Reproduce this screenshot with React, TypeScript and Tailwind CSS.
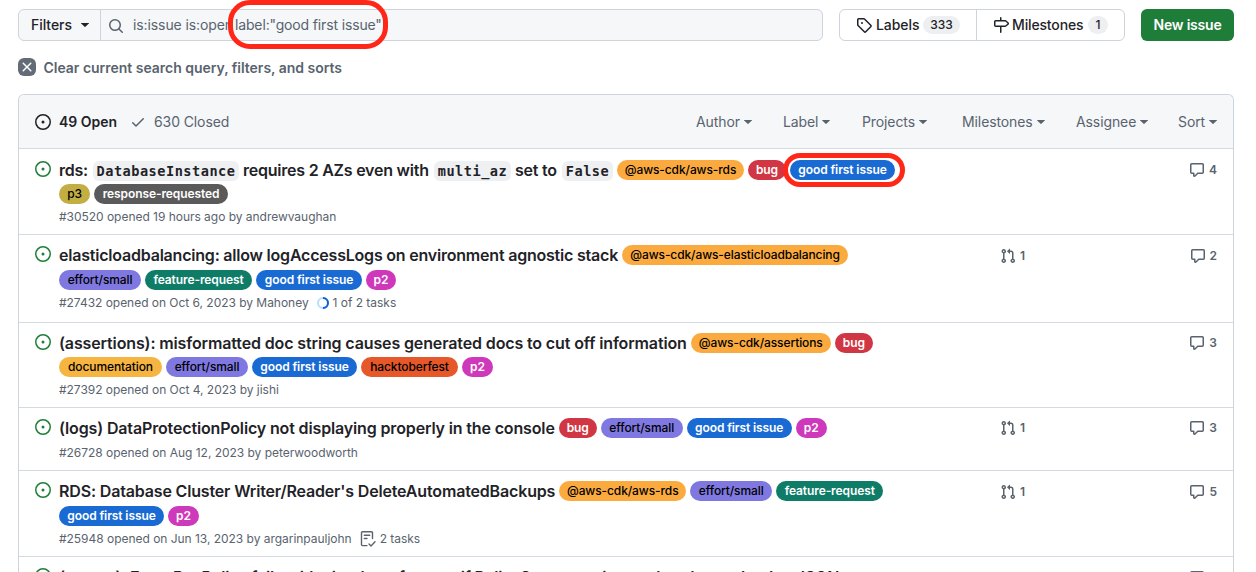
import React, { ReactNode } from "react";

type Tint = { bg: string; fg: string };

const tints: Record<string, Tint> = {
  orange: { bg: "bg-[#fbaa3f]", fg: "text-black font-medium" },
  red: { bg: "bg-[#d03643]", fg: "text-white font-semibold" },
  blue: { bg: "bg-[#1a6ad3]", fg: "text-white font-semibold" },
  olive: { bg: "bg-[#c2ae43]", fg: "text-black font-medium" },
  gray: { bg: "bg-[#5a5a5a]", fg: "text-white font-semibold" },
  purple: { bg: "bg-[#7f78e1]", fg: "text-black font-medium" },
  green: { bg: "bg-[#0f7c68]", fg: "text-white font-semibold" },
  pink: { bg: "bg-[#ce39bb]", fg: "text-white font-semibold" },
  yellow: { bg: "bg-[#f6b541]", fg: "text-black font-medium" },
  rust: { bg: "bg-[#e6572a]", fg: "text-black font-medium" },
};

type LabelInfo = { text: string; tint: string; w: string; ringed?: boolean };

const L = (text: string, tint: string, w: string, ringed = false): LabelInfo => ({ text, tint, w, ringed });

function Pill({ label }: { label: LabelInfo }) {
  const t = tints[label.tint];
  return (
    <span className={`relative flex h-5 shrink-0 items-center justify-center rounded-full text-xs tracking-[-0.1px] ${t.bg} ${t.fg} ${label.w}`}>
      {label.text}
      {label.ringed && <span className="absolute -left-[7px] -right-[10px] -top-[7px] -bottom-[7px] rounded-full border-[5px] border-[#ff2718]" />}
    </span>
  );
}

function Icon({ d, className, size = 16 }: { d: string; className?: string; size?: number }) {
  return (
    <svg width={size} height={size} viewBox="0 0 16 16" fill="currentColor" className={`shrink-0 ${className ?? ""}`}>
      <path fillRule="evenodd" d={d} />
    </svg>
  );
}

const icons = {
  issue: "M8 9.5a1.5 1.5 0 1 0 0-3 1.5 1.5 0 0 0 0 3ZM8 0a8 8 0 1 1 0 16A8 8 0 0 1 8 0ZM1.5 8a6.5 6.5 0 1 0 13 0 6.5 6.5 0 0 0-13 0Z",
  search: "M10.68 11.74a6 6 0 0 1-7.922-8.982 6 6 0 0 1 8.982 7.922l3.04 3.04a.749.749 0 0 1-.326 1.275.749.749 0 0 1-.734-.215ZM11.5 7a4.499 4.499 0 1 0-8.997 0A4.499 4.499 0 0 0 11.5 7Z",
  tag: "M1 7.775V2.75C1 1.784 1.784 1 2.75 1h5.025c.464 0 .91.184 1.238.513l6.25 6.25a1.75 1.75 0 0 1 0 2.474l-5.026 5.026a1.75 1.75 0 0 1-2.474 0l-6.25-6.25A1.752 1.752 0 0 1 1 7.775Zm1.5 0c0 .066.026.13.073.177l6.25 6.25a.25.25 0 0 0 .354 0l5.025-5.025a.25.25 0 0 0 0-.354l-6.25-6.25a.25.25 0 0 0-.177-.073H2.75a.25.25 0 0 0-.25.25ZM6 5a1 1 0 1 1 0 2 1 1 0 0 1 0-2Z",
  milestone: "M7.75 0a.75.75 0 0 1 .75.75V3h3.634c.414 0 .814.147 1.13.414l2.07 1.75a1.75 1.75 0 0 1 0 2.672l-2.07 1.75a1.75 1.75 0 0 1-1.13.414H8.5v5.25a.75.75 0 0 1-1.5 0V10H2.75A1.75 1.75 0 0 1 1 8.25v-3.5C1 3.784 1.784 3 2.75 3H7V.75A.75.75 0 0 1 7.75 0Zm4.384 8.5a.25.25 0 0 0 .161-.06l2.07-1.75a.248.248 0 0 0 0-.38l-2.07-1.75a.25.25 0 0 0-.161-.06H2.75a.25.25 0 0 0-.25.25v3.5c0 .138.112.25.25.25h9.384Z",
  check: "M13.78 4.22a.75.75 0 0 1 0 1.06l-7.25 7.25a.75.75 0 0 1-1.06 0L2.22 9.28a.751.751 0 0 1 .018-1.042.751.751 0 0 1 1.042-.018L6 10.94l6.72-6.72a.75.75 0 0 1 1.06 0Z",
  x: "M3.72 3.72a.75.75 0 0 1 1.06 0L8 6.94l3.22-3.22a.749.749 0 0 1 1.275.326.749.749 0 0 1-.215.734L9.06 8l3.22 3.22a.749.749 0 0 1-.326 1.275.749.749 0 0 1-.734-.215L8 9.06l-3.22 3.22a.751.751 0 0 1-1.042-.018.751.751 0 0 1-.018-1.042L6.94 8 3.72 4.78a.75.75 0 0 1 0-1.06Z",
  comment: "M1 2.75C1 1.784 1.784 1 2.75 1h10.5c.966 0 1.75.784 1.75 1.75v7.5A1.75 1.75 0 0 1 13.25 12H9.06l-2.573 2.573A1.458 1.458 0 0 1 4 13.543V12H2.75A1.75 1.75 0 0 1 1 10.25Zm1.75-.25a.25.25 0 0 0-.25.25v7.5c0 .138.112.25.25.25h2a.75.75 0 0 1 .75.75v2.19l2.72-2.72a.749.749 0 0 1 .53-.22h4.5a.25.25 0 0 0 .25-.25v-7.5a.25.25 0 0 0-.25-.25Z",
  pr: "M1.5 3.25a2.25 2.25 0 1 1 3 2.122v5.256a2.251 2.251 0 1 1-1.5 0V5.372A2.25 2.25 0 0 1 1.5 3.25Zm5.677-.177L9.573.677A.25.25 0 0 1 10 .854V2.5h1A2.5 2.5 0 0 1 13.5 5v5.628a2.251 2.251 0 1 1-1.5 0V5a1 1 0 0 0-1-1h-1v1.646a.25.25 0 0 1-.427.177L7.177 3.427a.25.25 0 0 1 0-.354ZM3.75 2.5a.75.75 0 1 0 0 1.5.75.75 0 0 0 0-1.5Zm0 9.5a.75.75 0 1 0 0 1.5.75.75 0 0 0 0-1.5Zm8.25.75a.75.75 0 1 0 1.5 0 .75.75 0 0 0-1.5 0Z",
};

function Caret({ className = "" }: { className?: string }) {
  return (
    <svg width="8" height="4" viewBox="0 0 8 4" fill="currentColor" className={`shrink-0 ${className}`}>
      <path d="M0.3 0H7.7Q8.2 0 7.8 .4L4.4 3.8Q4 4.1 3.6 3.8L.2 .4Q-.2 0 .3 0Z" />
    </svg>
  );
}

function Code({ children, className }: { children: ReactNode; className: string }) {
  return (
    <code className={`mt-0.5 flex h-5 shrink-0 items-center justify-center rounded-md bg-[#eff0f2] font-['DejaVu_Sans_Mono',monospace] text-[13.6px] font-bold tracking-[0.5px] ${className}`}>
      {children}
    </code>
  );
}

function ProgressRing() {
  return (
    <svg width="12" height="12" viewBox="0 0 12 12" fill="none" strokeWidth="2" className="ml-2 mr-1 shrink-0">
      <circle cx="6" cy="6" r="5" stroke="#b6e0ff" />
      <path d="M6 1a5 5 0 0 1 0 10" stroke="#0d5fd8" />
    </svg>
  );
}

function TaskIcon() {
  return (
    <svg width="16" height="16" viewBox="0 0 16 16" fill="none" stroke="currentColor" strokeWidth="1.4" strokeLinecap="round" strokeLinejoin="round" className="ml-2 mr-1 shrink-0">
      <path d="M7 14.6H2.5A1 1 0 0 1 1.5 13.6V1.8A1 1 0 0 1 2.5.8H11.5A1 1 0 0 1 12.5 1.8V7.5M4.3 4.2H9.7M4.3 7.5H7M9 12.9L11 14.9 15 10.8" />
    </svg>
  );
}

type Issue = {
  height: string;
  iconTop: string;
  titleTop: string;
  labelTop?: string;
  metaTop: string;
  sideTop: string;
  title: ReactNode;
  first?: LabelInfo[];
  second?: LabelInfo[];
  meta?: ReactNode;
  prs?: number;
  comments: number;
};

const goodFirst = (w = "w-[105px]", ringed = false) => L("good first issue", "blue", w, ringed);

const issues: Issue[] = [
  {
    height: "h-[86px]",
    iconTop: "mt-3",
    titleTop: "mt-[9px]",
    labelTop: "mt-0.5",
    metaTop: "mt-[3px]",
    sideTop: "mt-3",
    title: (
      <span className="flex items-center tracking-[-0.23px]">
        <span className="w-[34px]">rds:</span>
        <Code className="w-[146px]">DatabaseInstance</Code>
        <span className="w-[195px] pl-1">requires 2 AZs even with</span>
        <Code className="w-[77px]">multi_az</Code>
        <span className="w-[51px] pl-1">set to</span>
        <Code className="w-[51px]">False</Code>
      </span>
    ),
    first: [L("@aws-cdk/aws-rds", "orange", "w-[127px]"), L("bug", "red", "w-[38px]"), goodFirst("w-[105px]", true)],
    second: [L("p3", "olive", "w-[31px]"), L("response-requested", "gray", "w-[134px]")],
    meta: "#30520 opened 19 hours ago by andrewvaughan",
    comments: 4,
  },
  {
    height: "h-[88px]",
    iconTop: "mt-[11px]",
    titleTop: "mt-2",
    labelTop: "mt-[3px]",
    metaTop: "mt-[3px]",
    sideTop: "mt-3",
    title: <span className="tracking-[-0.21px]">elasticloadbalancing: allow logAccessLogs on environment agnostic stack</span>,
    first: [L("@aws-cdk/aws-elasticloadbalancing", "orange", "w-[226px]")],
    second: [L("effort/small", "purple", "w-[82px]"), L("feature-request", "green", "w-[107px]"), goodFirst("w-[106px]"), L("p2", "pink", "w-[30px]")],
    meta: (
      <>
        #27432 opened on Oct 6, 2023 by Mahoney
        <ProgressRing />1 of 2 tasks
      </>
    ),
    prs: 1,
    comments: 2,
  },
  {
    height: "h-[85px]",
    iconTop: "mt-[11px]",
    titleTop: "mt-2",
    labelTop: "mt-0.5",
    metaTop: "mt-[3px]",
    sideTop: "mt-[11px]",
    title: <span className="tracking-[-0.13px]">(assertions): misformatted doc string causes generated docs to cut off information</span>,
    first: [L("@aws-cdk/assertions", "orange", "w-[140px]"), L("bug", "red", "w-[38px]")],
    second: [
      L("documentation", "yellow", "w-[103px]"),
      L("effort/small", "purple", "w-[82px]"),
      goodFirst(),
      L("hacktoberfest", "rust", "w-[97px]"),
      L("p2", "pink", "w-[31px]"),
    ],
    meta: "#27392 opened on Oct 4, 2023 by jishi",
    comments: 3,
  },
  {
    height: "h-[63px]",
    iconTop: "mt-[11px]",
    titleTop: "mt-2",
    metaTop: "mt-1",
    sideTop: "mt-[11px]",
    title: <span className="tracking-[-0.145px]">(logs) DataProtectionPolicy not displaying properly in the console</span>,
    first: [L("bug", "red", "w-[38px]"), L("effort/small", "purple", "w-[82px]"), goodFirst(), L("p2", "pink", "w-[31px]")],
    meta: "#26728 opened on Aug 12, 2023 by peterwoodworth",
    prs: 1,
    comments: 3,
  },
  {
    height: "h-[86px]",
    iconTop: "mt-[11px]",
    titleTop: "mt-2",
    labelTop: "mt-[3px]",
    metaTop: "mt-[3px]",
    sideTop: "mt-3",
    title: <span className="tracking-[-0.16px]">RDS: Database Cluster Writer/Reader's DeleteAutomatedBackups</span>,
    first: [L("@aws-cdk/aws-rds", "orange", "w-[127px]"), L("effort/small", "purple", "w-[82px]"), L("feature-request", "green", "w-[107px]")],
    second: [goodFirst(), L("p2", "pink", "w-[31px]")],
    meta: (
      <>
        #25948 opened on Jun 13, 2023 by argarinpauljohn
        <TaskIcon />2 tasks
      </>
    ),
    prs: 1,
    comments: 5,
  },
  {
    height: "h-[80px]",
    iconTop: "mt-[11px]",
    titleTop: "mt-2",
    metaTop: "mt-1",
    sideTop: "mt-3",
    title: <span className="tracking-[-0.17px]">(events): EventBusPolicy fails with circular reference if PolicyStatement is not already resolved to JSON</span>,
    comments: 3,
  },
];

function IssueRow({ issue }: { issue: Issue }) {
  return (
    <li className={`flex shrink-0 border-t border-[#d3dae1] ${issue.height}`}>
      <Icon d={icons.issue} className={`ml-4 text-[#1f7f39] ${issue.iconTop}`} />
      <div className="ml-2 flex w-[927px] shrink-0 flex-col">
        <div className={`flex h-6 items-center whitespace-nowrap text-base font-semibold text-[#1f2328] ${issue.titleTop}`}>
          {issue.title}
          <span className="mb-px ml-1 flex gap-1">
            {issue.first?.map((l) => <Pill key={l.text} label={l} />)}
          </span>
        </div>
        {issue.second && (
          <div className={`flex h-[21px] gap-1 ${issue.labelTop}`}>
            {issue.second.map((l) => <Pill key={l.text} label={l} />)}
          </div>
        )}
        <div className={`flex h-[18px] items-center whitespace-nowrap text-xs tracking-[-0.03px] text-[#59636e] ${issue.metaTop}`}>{issue.meta}</div>
      </div>
      <div className={`flex h-[18px] flex-1 items-center justify-between pl-[14px] pr-4 text-xs font-semibold text-[#59636e] ${issue.sideTop}`}>
        <span className="flex items-center gap-1">
          {issue.prs && (
            <>
              <Icon d={icons.pr} />
              {issue.prs}
            </>
          )}
        </span>
        <span className="flex items-center gap-1">
          <Icon d={icons.comment} />
          {issue.comments}
        </span>
      </div>
    </li>
  );
}

const menus = [
  { name: "Author", gap: "w-[87px]" },
  { name: "Label", gap: "w-[79px]" },
  { name: "Projects", gap: "w-[100px]" },
  { name: "Milestones", gap: "w-[114px]" },
  { name: "Assignee", gap: "w-[102px]" },
  { name: "Sort", gap: "w-[55px]" },
];

export default function App() {
  return (
    <div className="flex h-[572px] w-[1256px] flex-col overflow-hidden bg-white px-[18px] pt-[9px] font-['Inter',sans-serif] text-sm text-[#1f2328]">
      <div className="flex h-8 w-[1216px] shrink-0">
        <div className="flex w-[805px] rounded-md border border-[#cdd4dc] bg-[#f5f7f9]">
          <button className="flex w-[82px] items-center border-r border-[#cdd4dc] pl-3 font-medium tracking-[-0.05px]">
            Filters
            <Caret className="ml-[9px]" />
          </button>
          <div className="relative flex items-center whitespace-nowrap pl-[7px] text-[#59636e]">
            <Icon d={icons.search} className="mt-0.5" />
            <span className="ml-[9px] w-[102px] tracking-[-0.1px]">is:issue is:open</span>
            <span className="tracking-[-0.15px]">label:"good first issue"</span>
            <span className="absolute -top-[10px] left-[127px] h-[49px] w-[160px] rounded-[22px] border-[5px] border-[#ff2718]" />
          </div>
        </div>
        <div className="ml-4 flex w-[286px] rounded-md border border-[#cdd4dc] font-medium">
          <button className="flex w-[137px] items-center border-r border-[#cdd4dc] pl-4">
            <Icon d={icons.tag} />
            <span className="ml-1 w-[47px] text-left tracking-[-0.05px]">Labels</span>
            <span className="flex h-[18px] w-[37px] items-center justify-center rounded-full bg-[#eeeff1] text-xs">333</span>
          </button>
          <button className="flex items-center pl-4">
            <Icon d={icons.milestone} />
            <span className="ml-[3px] w-[76px] text-left tracking-[-0.15px]">Milestones</span>
            <span className="flex h-[18px] w-5 items-center justify-center rounded-full bg-[#eeeff1] text-xs">1</span>
          </button>
        </div>
        <button className="ml-4 flex w-[93px] items-center justify-center rounded-md bg-[#1f7d3a] font-semibold tracking-[-0.2px] text-white">New issue</button>
      </div>

      <div className="mt-[17px] flex h-5 shrink-0 items-center font-semibold text-[#59636e]">
        <span className="mb-0.5 flex size-[18px] items-center justify-center rounded-md bg-[#636c76] text-white">
          <Icon d={icons.x} />
        </span>
        <span className="ml-[7.5px] tracking-[-0.02px]">Clear current search query, filters, and sorts</span>
      </div>

      <div className="mt-4 flex w-[1216px] flex-col rounded-t-md border border-b-0 border-[#cdd4dc]">
        <div className="flex h-[53px] shrink-0 items-center rounded-t-md bg-[#f5f7f9] pl-4 text-[#59636e]">
          <Icon d={icons.issue} className="text-[#1f2328]" />
          <span className="ml-2 w-[71px] font-semibold text-[#1f2328]">49 Open</span>
          <Icon d={icons.check} />
          <span className="ml-2 tracking-[-0.1px]">630 Closed</span>
          <div className="ml-auto flex">
            {menus.map((m) => (
              <button key={m.name} className={`flex items-center gap-1 tracking-[-0.1px] ${m.gap}`}>
                {m.name}
                <Caret />
              </button>
            ))}
          </div>
        </div>
        <ul className="flex flex-col">
          {issues.map((issue, i) => <IssueRow key={i} issue={issue} />)}
        </ul>
      </div>
    </div>
  );
}
